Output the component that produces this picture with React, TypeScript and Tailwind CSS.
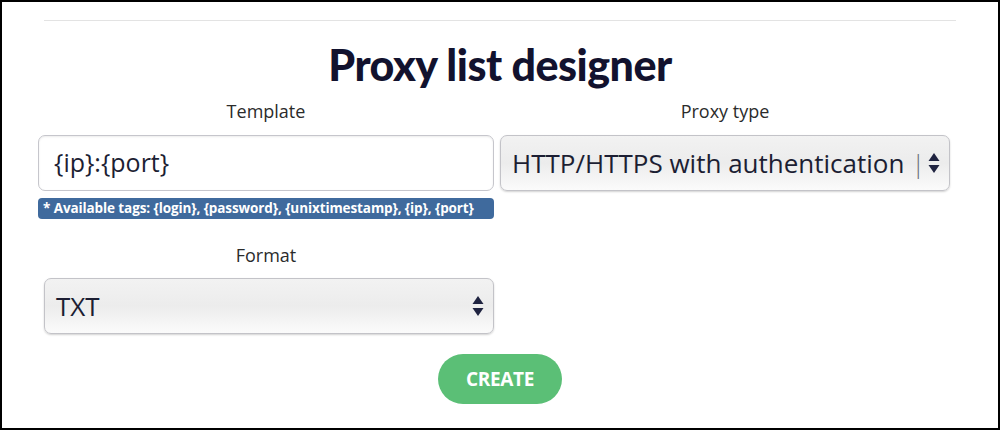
import React from "react";

function SelectArrows() {
  return (
    <svg width="12" height="24" viewBox="0 0 12 24" className="shrink-0">
      <path d="M6 2 L11.5 10 L0.5 10 Z" fill="#1f2340" />
      <path d="M6 22 L11.5 14 L0.5 14 Z" fill="#1f2340" />
    </svg>
  );
}

function FakeSelect({ value, clipped, className }: { value: string; clipped?: string; className?: string }) {
  return (
    <div
      className={`flex h-[56px] items-center gap-2 rounded-[7px] border border-[#c3c3c8] bg-gradient-to-b from-[#f2f2f2] via-[#ececec] to-[#fbfbfb] pl-[11px] pr-[9px] shadow-[0_1px_2px_rgba(0,0,0,0.18)] ${className ?? ""}`}
    >
      <span className="min-w-0 flex-1 whitespace-nowrap text-[26px] text-[#1c1e33]">
        {value}
        {clipped && <span className="font-light text-[#6b6d7a]">{clipped}</span>}
      </span>
      <SelectArrows />
    </div>
  );
}

function Label({ children }: { children: React.ReactNode }) {
  return <div className="text-center text-[18px] leading-[22px] text-[#2b2b2b]">{children}</div>;
}

export default function App() {
  return (
    <div className="h-[430px] w-[1000px] border-2 border-black bg-white font-['Open_Sans',sans-serif]">
      <div className="mx-[42px] mt-[18px] h-px bg-[#e3e3e3]" />
      <h1 className="mt-[19px] text-center font-['Lato',sans-serif] text-[43px] font-black leading-[50px] tracking-[-0.5px] text-[#12122e]">
        Proxy list designer
      </h1>
      <div className="mt-[10px] grid grid-cols-[456px_450px] gap-x-[6px] pl-[36px]">
        <div className="flex flex-col">
          <Label>Template</Label>
          <div className="mt-[13px] flex h-[56px] items-center rounded-[7px] border border-[#c6c6cc] bg-white px-[15px] shadow-[inset_0_1px_2px_rgba(0,0,0,0.08)]">
            <span className="text-[25px] text-[#1c1e33]">{"{ip}:{port}"}</span>
          </div>
          <div className="mt-[7px] flex h-[21px] items-center whitespace-nowrap rounded-[4px] bg-[#3f6a9d] px-[5px] text-[13.5px] font-bold tracking-[-0.1px] text-white">
            {"* Available tags: {login}, {password}, {unixtimestamp}, {ip}, {port}"}
          </div>
          <div className="mt-[25px]">
            <Label>Format</Label>
          </div>
          <FakeSelect value="TXT" className="ml-[6px] mt-[12px]" />
        </div>
        <div className="flex flex-col">
          <Label>Proxy type</Label>
          <FakeSelect value="HTTP/HTTPS with authentication " clipped="|" className="mt-[13px]" />
        </div>
      </div>
      <div className="mt-[20px] flex justify-center">
        <button className="h-[50px] w-[124px] rounded-full bg-[#5bbf76] text-[19px] font-bold tracking-[-0.3px] text-white">CREATE</button>
      </div>
    </div>
  );
}
